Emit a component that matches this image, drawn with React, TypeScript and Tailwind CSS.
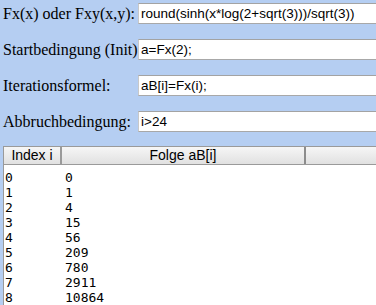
export default function App() {
  const fields = [
    { label: "Fx(x) oder Fxy(x,y):", value: "round(sinh(x*log(2+sqrt(3)))/sqrt(3))" },
    { label: "Startbedingung (Init)", value: "a=Fx(2);" },
    { label: "Iterationsformel:", value: "aB[i]=Fx(i);" },
    { label: "Abbruchbedingung:", value: "i>24" },
  ];
  const rows = [0, 1, 4, 15, 56, 209, 780, 2911, 10864];

  return (
    <div className="h-[305px] w-[376px] overflow-hidden bg-[#b5cef2]">
      <div className="flex flex-col pt-[3px]">
        {fields.map((f) => (
          <div key={f.label} className="flex h-[36px] items-start">
            <div className="w-[138px] shrink-0 whitespace-nowrap pl-[3px] pt-[1px] font-['Liberation_Serif',serif] text-[16px] leading-[20px] text-black">
              {f.label}
            </div>
            <div className="h-[21px] w-[250px] shrink-0 border border-t-[#a3a3a3] border-l-[#c8c8c8] border-r-[#c8c8c8] border-b-[#a8a8a8] bg-white pl-[2px] font-['Liberation_Sans',sans-serif] text-[13.5px] leading-[19px] text-black whitespace-nowrap">
              {f.value}
            </div>
          </div>
        ))}
      </div>

      <div className="ml-[3px] mt-[-1px] w-[390px]">
        <div className="flex h-[19px] border border-[#9a9a9a] bg-gradient-to-b from-[#f6f6f6] to-[#e1e1e1] font-['Liberation_Sans',sans-serif] text-[14px] leading-[17px] text-black">
          <div className="w-[58px] shrink-0 border-r-2 border-[#9a9a9a] text-center">Index i</div>
          <div className="w-[244px] shrink-0 border-r-2 border-[#8c8c8c] text-center">Folge aB[i]</div>
          <div className="flex-1" />
        </div>
        <div className="h-[200px] border-l border-[#9a9a9a] bg-white pt-[5px] font-['DejaVu_Sans_Mono',monospace] text-[13px] leading-[15px] text-black">
          {rows.map((v, i) => (
            <div key={i} className="flex">
              <div className="w-[61px] shrink-0 pl-[1px]">{i}</div>
              <div>{v}</div>
            </div>
          ))}
        </div>
      </div>
    </div>
  );
}
